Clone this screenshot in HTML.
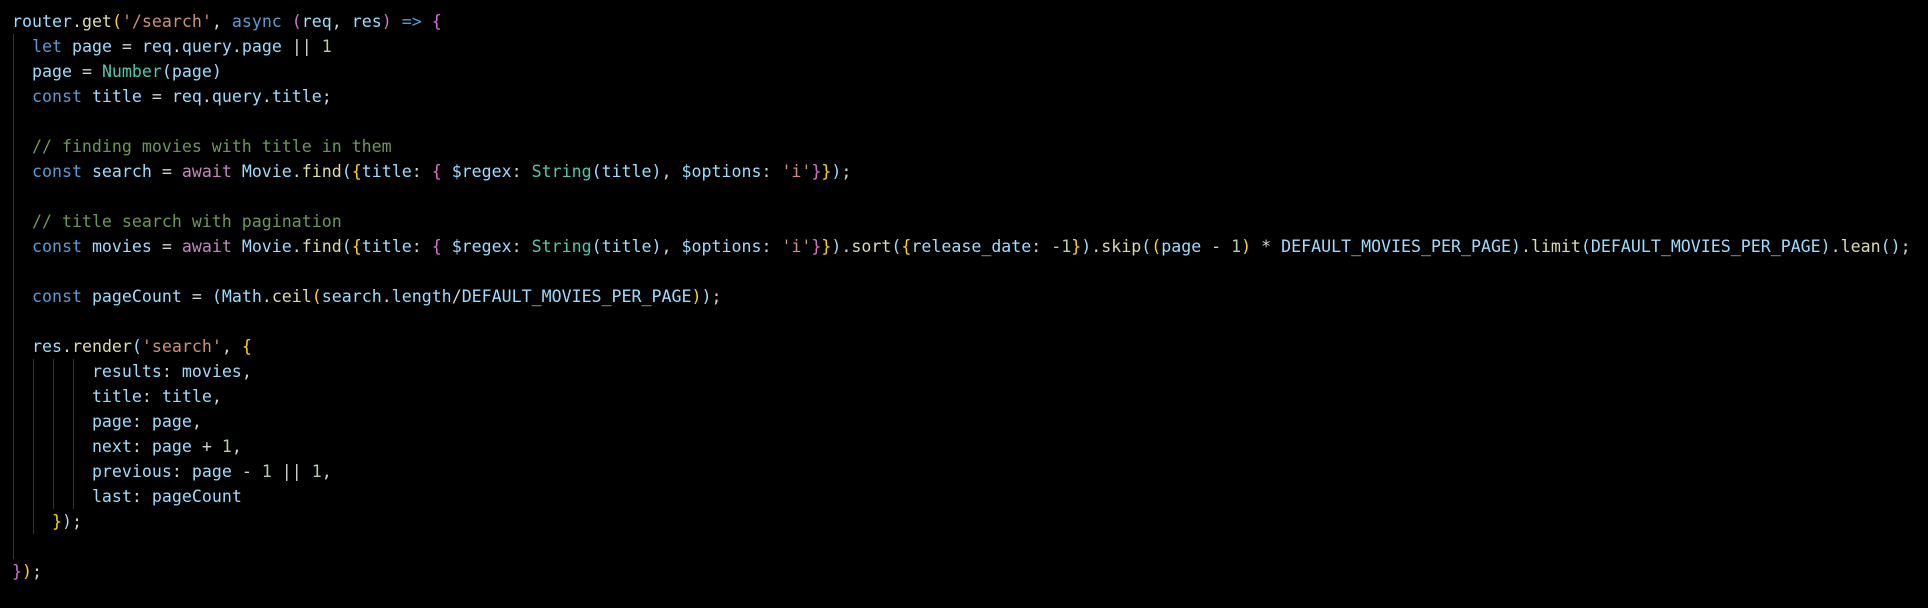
<!DOCTYPE html>
<html><head><meta charset="utf-8"><style>
html,body{margin:0;padding:0;background:#000;width:1928px;height:608px;overflow:hidden}
pre{position:absolute;left:12px;top:9px;margin:0;font-family:"DejaVu Sans Mono","Liberation Mono",monospace;font-size:16.6px;line-height:25px;color:#d4d4d4}
.v{color:#9cdcfe}.f{color:#dcdcaa}.k{color:#569cd6}.a{color:#c586c0}.s{color:#ce9178}.n{color:#b5cea8}.c{color:#4ec9b0}.m{color:#6a9955}
.y{color:#ffd700}.p{color:#da70d6}.b{color:#9cdcfe}.w{color:#d4d4d4}
.g{position:absolute;width:1px;background:#333}
</style></head><body>
<div class="g" style="left:13px;top:34px;height:525px"></div>
<div class="g" style="left:33px;top:359px;height:175px"></div>
<div class="g" style="left:53px;top:359px;height:150px"></div>
<div class="g" style="left:73px;top:359px;height:150px"></div>
<pre><span class="v">router</span>.<span class="f">get</span><span class="y">(</span><span class="s">'/search'</span>, <span class="k">async</span> <span class="p">(</span><span class="v">req</span>, <span class="v">res</span><span class="p">)</span> <span class="k">=&gt;</span> <span class="p">{</span>
  <span class="k">let</span> <span class="v">page</span> = <span class="v">req</span>.<span class="v">query</span>.<span class="v">page</span> || <span class="n">1</span>
  <span class="v">page</span> = <span class="c">Number</span><span class="b">(</span><span class="v">page</span><span class="b">)</span>
  <span class="k">const</span> <span class="v">title</span> = <span class="v">req</span>.<span class="v">query</span>.<span class="v">title</span>;

  <span class="m">// finding movies with title in them</span>
  <span class="k">const</span> <span class="v">search</span> = <span class="a">await</span> <span class="v">Movie</span>.<span class="f">find</span><span class="b">(</span><span class="y">{</span><span class="v">title</span>: <span class="p">{</span> <span class="v">$regex</span>: <span class="c">String</span><span class="b">(</span><span class="v">title</span><span class="b">)</span>, <span class="v">$options</span>: <span class="s">'i'</span><span class="p">}</span><span class="y">}</span><span class="b">)</span>;

  <span class="m">// title search with pagination</span>
  <span class="k">const</span> <span class="v">movies</span> = <span class="a">await</span> <span class="v">Movie</span>.<span class="f">find</span><span class="b">(</span><span class="y">{</span><span class="v">title</span>: <span class="p">{</span> <span class="v">$regex</span>: <span class="c">String</span><span class="b">(</span><span class="v">title</span><span class="b">)</span>, <span class="v">$options</span>: <span class="s">'i'</span><span class="p">}</span><span class="y">}</span><span class="b">)</span>.<span class="f">sort</span><span class="b">(</span><span class="y">{</span><span class="v">release_date</span>: <span class="n">-1</span><span class="y">}</span><span class="b">)</span>.<span class="f">skip</span><span class="b">(</span><span class="y">(</span><span class="v">page</span> - <span class="n">1</span><span class="y">)</span> * <span class="v">DEFAULT_MOVIES_PER_PAGE</span><span class="b">)</span>.<span class="f">limit</span><span class="b">(</span><span class="v">DEFAULT_MOVIES_PER_PAGE</span><span class="b">)</span>.<span class="f">lean</span><span class="b">()</span>;

  <span class="k">const</span> <span class="v">pageCount</span> = <span class="b">(</span><span class="v">Math</span>.<span class="f">ceil</span><span class="y">(</span><span class="v">search</span>.<span class="v">length</span>/<span class="v">DEFAULT_MOVIES_PER_PAGE</span><span class="y">)</span><span class="b">)</span>;

  <span class="v">res</span>.<span class="f">render</span><span class="b">(</span><span class="s">'search'</span>, <span class="y">{</span>
        <span class="v">results</span>: <span class="v">movies</span>,
        <span class="v">title</span>: <span class="v">title</span>,
        <span class="v">page</span>: <span class="v">page</span>,
        <span class="v">next</span>: <span class="v">page</span> + <span class="n">1</span>,
        <span class="v">previous</span>: <span class="v">page</span> - <span class="n">1</span> || <span class="n">1</span>,
        <span class="v">last</span>: <span class="v">pageCount</span>
    <span class="y">}</span><span class="b">)</span>;

<span class="p">}</span><span class="y">)</span>;</pre>
</body></html>
